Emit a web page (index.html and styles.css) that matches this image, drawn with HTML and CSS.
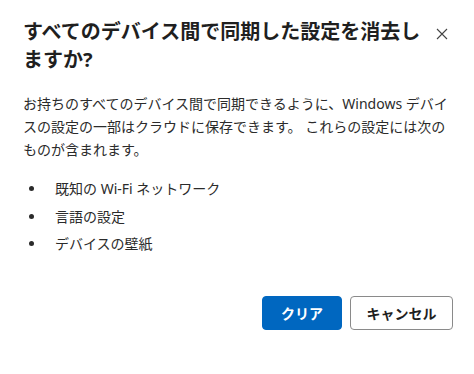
FILE: index.html
```html
<!DOCTYPE html>
<html lang="ja">
<head>
<meta charset="utf-8">
<link rel="stylesheet" href="styles.css">
</head>
<body>
<div class="dialog">
  <div class="header">
    <h1 class="title">すべてのデバイス間で同期した設定を消去しますか?</h1>
    <button class="close" aria-label="閉じる">
      <svg width="12" height="12" viewBox="0 0 12 12"><path d="M1 1L11 11M11 1L1 11" stroke="#444" stroke-width="1.1" fill="none"/></svg>
    </button>
  </div>
  <p class="desc">お持ちのすべてのデバイス間で同期できるように、Windows デバイスの設定の一部はクラウドに保存できます。 これらの設定には次のものが含まれます。</p>
  <ul class="items">
    <li>既知の Wi-Fi ネットワーク</li>
    <li>言語の設定</li>
    <li>デバイスの壁紙</li>
  </ul>
  <div class="actions">
    <button class="btn primary">クリア</button>
    <button class="btn secondary">キャンセル</button>
  </div>
</div>
</body>
</html>
```
FILE: styles.css
```css
html, body {
  margin: 0;
  padding: 0;
  background: #ffffff;
}
body {
  font-family: "Noto Sans", "Noto Sans CJK JP", sans-serif;
  color: #2b2b2b;
}
.dialog {
  padding: 18px 21px 0 23px;
}
.header {
  display: flex;
  align-items: flex-start;
  gap: 2px;
}
.title {
  flex: 1;
  margin: 0;
  font-size: 20px;
  line-height: 28px;
  font-weight: 700;
  color: #1f1f1f;
}
.close {
  width: 22px;
  height: 28px;
  padding: 0;
  margin: 2px 0 0 0;
  border: none;
  background: transparent;
  display: flex;
  align-items: center;
  justify-content: center;
}
.desc {
  margin: 18px 0 0 0;
  font-size: 14px;
  line-height: 23px;
}
.items {
  margin: 14px 0 0 0;
  padding: 0;
  list-style: none;
  font-size: 14px;
  line-height: 27.5px;
}
.items li {
  display: flex;
  align-items: center;
}
.items li::before {
  content: "";
  width: 5px;
  height: 5px;
  border-radius: 50%;
  background: #2b2b2b;
  margin: 0 21px 0 6px;
  flex: none;
}
.actions {
  display: flex;
  justify-content: flex-end;
  gap: 8px;
  margin-top: 38px;
}
.btn {
  height: 34px;
  border-radius: 4px;
  font-family: "Noto Sans", "Noto Sans CJK JP", sans-serif;
  font-size: 14px;
  font-weight: 700;
  padding: 0;
}
.primary {
  width: 80px;
  background: #0067c0;
  border: 1px solid #0067c0;
  color: #ffffff;
}
.secondary {
  width: 103px;
  background: #ffffff;
  border: 1px solid #8a8a8a;
  color: #1f1f1f;
}
```
